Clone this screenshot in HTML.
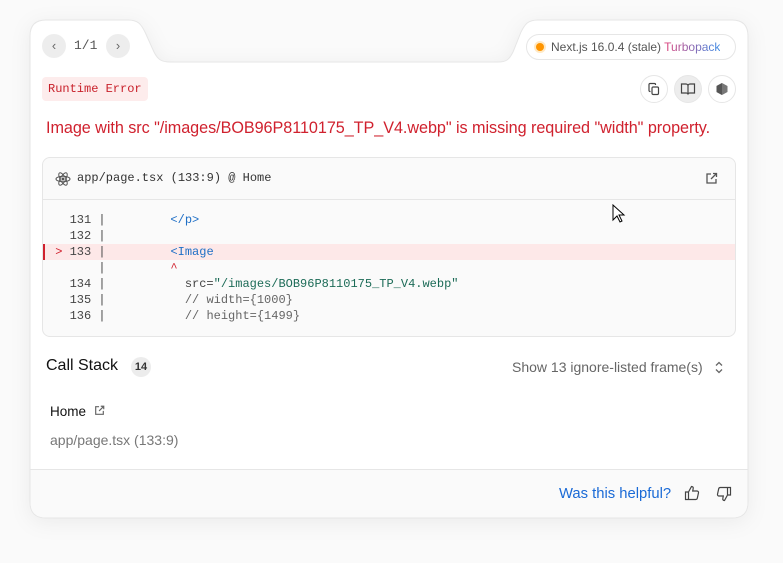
<!DOCTYPE html>
<html><head><meta charset="utf-8"><style>
*{box-sizing:border-box;margin:0;padding:0}
body{width:783px;height:563px;background:#fafafa;font-family:"Liberation Sans",sans-serif;position:relative;overflow:hidden}
.a{position:absolute}
.mono{font-family:"Liberation Mono",monospace}
.circ{position:absolute;width:24px;height:24px;border-radius:50%;background:#ededed;color:#666;font-size:13px;text-align:center;line-height:23px}
.ib{position:absolute;width:28px;height:28px;border-radius:50%;border:1px solid #e6e6e6;background:#fff;display:flex;align-items:center;justify-content:center}
.code div{height:16px;line-height:16px;white-space:pre;font-size:12px;color:#444;padding-left:5px}
</style></head><body>
<svg class="a" style="left:0;top:0;filter:drop-shadow(0 4px 10px rgba(0,0,0,0.06))" width="783" height="563">
<path d="M46,20 H128 C138,20 141,24 145,32 L154,52 C158,60 162,62 170,62 H498 C506,62 509,60 513,52 L521,32 C525,24 528,20 538,20 H732 Q748,20 748,36 V502 Q748,518 732,518 H46 Q30,518 30,502 V36 Q30,20 46,20 Z" fill="#fff" stroke="#e6e6e6"/>
<path d="M30.5,469 H747.5 V502 Q747.5,517.5 732,517.5 H46 Q30.5,517.5 30.5,502 Z" fill="#fafafa"/>
<line x1="30" y1="469.5" x2="748" y2="469.5" stroke="#e6e6e6"/>
</svg>
<div class="circ" style="left:42px;top:34px">‹</div>
<div class="a mono" style="left:74px;top:38px;font-size:13px;color:#555">1/1</div>
<div class="circ" style="left:106px;top:34px">›</div>
<div class="a" style="left:526px;top:34px;width:210px;height:26px;border:1px solid #e6e6e6;border-radius:13px;background:#fff;font-size:12px;line-height:24px;padding-left:24px;color:#555">
<span style="position:absolute;left:7px;top:6px;width:12px;height:12px;border-radius:50%;background:#ffe9c4"></span><span style="position:absolute;left:9px;top:8px;width:8px;height:8px;border-radius:50%;background:#ff9500"></span>
Next.js 16.0.4 (stale) <span style="background:linear-gradient(90deg,#e0427a,#3b8be6);-webkit-background-clip:text;color:transparent">Turbopack</span></div>
<div class="a mono" style="left:42px;top:77px;height:24px;padding:0 6px;background:#fdecec;border-radius:4px;color:#c8202a;font-size:12px;line-height:24px">Runtime Error</div>
<div class="ib" style="left:640px;top:75px"><svg width="14" height="14" viewBox="0 0 14 14" fill="none" stroke="#444" stroke-width="1.2"><rect x="5" y="5" width="6.5" height="7.5" rx="1.2"/><path d="M3.5 9.5H3a1 1 0 0 1-1-1V2.5a1 1 0 0 1 1-1h4.5a1 1 0 0 1 1 1V3"/></svg></div>
<div class="ib" style="left:674px;top:75px;background:#ededed"><svg width="16" height="14" viewBox="0 0 16 14" fill="none" stroke="#444" stroke-width="1.2"><path d="M8 3v9M1.5 2h4.5A2 2 0 0 1 8 4a2 2 0 0 1 2-2h4.5v9H10a2 2 0 0 0-2 1 2 2 0 0 0-2-1H1.5z"/></svg></div>
<div class="ib" style="left:708px;top:75px"><svg width="14" height="14" viewBox="0 0 14 14"><path d="M7 1l5.5 3v6L7 13 1.5 10V4z" fill="#777"/><path d="M7 1v12L1.5 10V4z" fill="#555"/></svg></div>
<div class="a" style="left:46px;top:119px;font-size:16.2px;letter-spacing:-0.05px;color:#d0212e">Image with src "/images/BOB96P8110175_TP_V4.webp" is missing required "width" property.</div>
<div class="a" style="left:42px;top:157px;width:694px;height:180px;border:1px solid #e6e6e6;border-radius:8px;background:#fafafa;overflow:hidden">
<div style="height:42px;border-bottom:1px solid #e6e6e6;position:relative">
<svg class="a" style="left:12px;top:13px" width="16" height="16" viewBox="0 0 16 16" fill="none" stroke="#555" stroke-width="1"><ellipse cx="8" cy="8" rx="7" ry="2.7"/><ellipse cx="8" cy="8" rx="7" ry="2.7" transform="rotate(60 8 8)"/><ellipse cx="8" cy="8" rx="7" ry="2.7" transform="rotate(120 8 8)"/><circle cx="8" cy="8" r="1" fill="#555"/></svg>
<div class="a mono" style="left:34px;top:13px;font-size:12px;color:#333">app/page.tsx (133:9) @ Home</div>
<svg class="a" style="left:662px;top:14px" width="13" height="13" viewBox="0 0 13 13" fill="none" stroke="#555" stroke-width="1.3"><path d="M6 2H2v9h9V7M8 1.5h3.5V5M11.5 1.5L6 7"/></svg>
</div>
<div class="code mono" style="padding-top:12px">
<div>   131 |         <span style="color:#1f6fc6">&lt;/p&gt;</span></div>
<div>   132 |</div>
<div style="background:#fde8e8;border-left:2px solid #d0212e;padding-left:3px"><span style="color:#d0212e"> &gt;</span> 133 |         <span style="color:#1f6fc6">&lt;Image</span></div>
<div>       |         <span style="color:#d0212e">^</span></div>
<div>   134 |           src=<span style="color:#1c6b57">"/images/BOB96P8110175_TP_V4.webp"</span></div>
<div style="color:#666">   <span style="color:#444">135 |</span>           // width={1000}</div>
<div style="color:#666">   <span style="color:#444">136 |</span>           // height={1499}</div>
</div></div>
<div class="a" style="left:46px;top:357px;font-size:16px;color:#111">Call Stack</div>
<div class="a" style="left:131px;top:357px;width:20px;height:20px;border-radius:50%;background:#ececec;font-size:11px;text-align:center;line-height:20px;color:#333;font-weight:bold">14</div>
<div class="a" style="left:512px;top:359px;font-size:14px;color:#666">Show 13 ignore-listed frame(s)</div>
<svg class="a" style="left:714px;top:361px" width="10" height="13" viewBox="0 0 10 13" fill="none" stroke="#666" stroke-width="1.3"><path d="M2 4.5l3-3 3 3M2 8.5l3 3 3-3"/></svg>
<div class="a" style="left:50px;top:404px;font-size:13.5px;color:#111">Home</div>
<svg class="a" style="left:94px;top:405px" width="11" height="11" viewBox="0 0 13 13" fill="none" stroke="#666" stroke-width="1.4"><path d="M6 2H2v9h9V7M8 1.5h3.5V5M11.5 1.5L6 7"/></svg>
<div class="a" style="left:50px;top:432px;font-size:14px;color:#777">app/page.tsx (133:9)</div>
<div class="a" style="left:559px;top:486px;font-size:14.8px;color:#1a6ad6">Was this helpful?</div>
<svg class="a" style="left:684px;top:485px" width="16" height="16" viewBox="0 0 16 16" fill="none" stroke="#444" stroke-width="1.2"><path d="M1.5 7h3v7.5h-3zM4.5 7l3-5.5c1.2 0 2 .8 1.7 2L8.7 6H13a1.5 1.5 0 0 1 1.5 1.8l-1.2 5.4a1.6 1.6 0 0 1-1.6 1.3H4.5"/></svg>
<svg class="a" style="left:716px;top:486px" width="16" height="16" viewBox="0 0 16 16" fill="none" stroke="#444" stroke-width="1.2"><g transform="rotate(180 8 8)"><path d="M1.5 7h3v7.5h-3zM4.5 7l3-5.5c1.2 0 2 .8 1.7 2L8.7 6H13a1.5 1.5 0 0 1 1.5 1.8l-1.2 5.4a1.6 1.6 0 0 1-1.6 1.3H4.5"/></g></svg>
<svg class="a" style="left:612px;top:204px" width="14" height="20" viewBox="0 0 14 20"><path d="M1 1v15l4-4 3 6 2-1-3-6h5z" fill="#fff" stroke="#000"/></svg>
</body></html>
